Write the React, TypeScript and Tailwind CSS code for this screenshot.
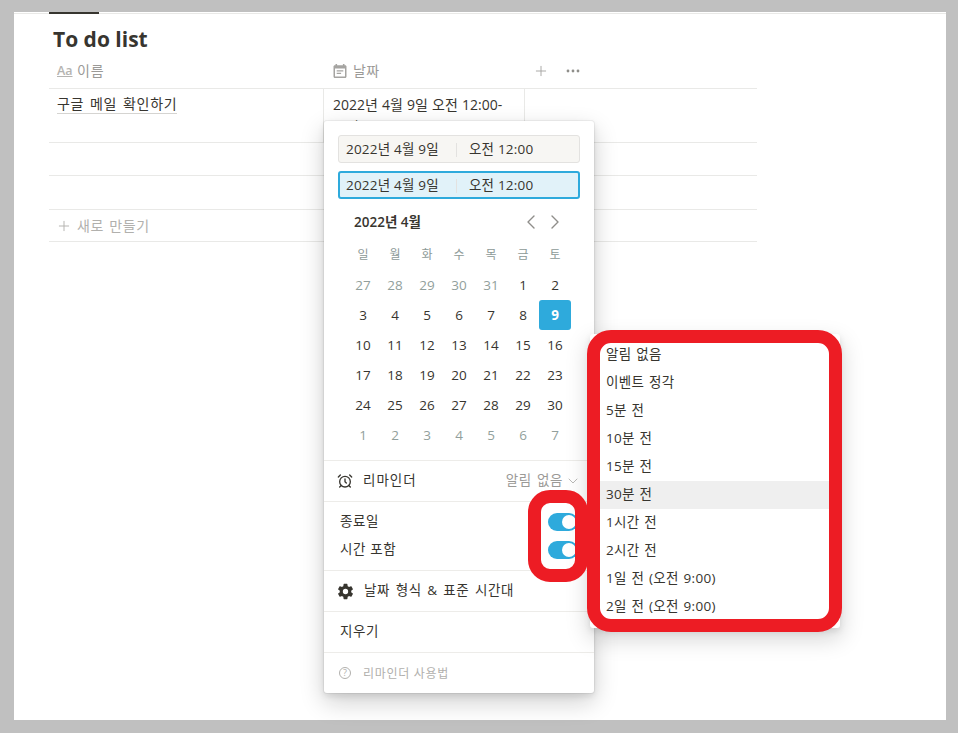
import { AlarmClock, ChevronDown, ChevronLeft, ChevronRight, Plus } from "lucide-react";
import { IoSettingsSharp } from "react-icons/io5";

const weekdays = ["일", "월", "화", "수", "목", "금", "토"];
const days = [
  27, 28, 29, 30, 31, 1, 2, 3, 4, 5, 6, 7, 8, 9, 10, 11, 12, 13, 14, 15, 16, 17, 18, 19, 20, 21, 22, 23, 24, 25, 26, 27,
  28, 29, 30, 1, 2, 3, 4, 5, 6, 7,
];
const reminders = [
  "알림 없음",
  "이벤트 정각",
  "5분 전",
  "10분 전",
  "15분 전",
  "30분 전",
  "1시간 전",
  "2시간 전",
  "1일 전 (오전 9:00)",
  "2일 전 (오전 9:00)",
];

function CalendarIcon() {
  return (
    <svg width="16" height="16" viewBox="0 0 16 16" className="shrink-0 text-[#a5a4a1]">
      <path
        fill="currentColor"
        d="M3.5 1h1.6v1.2h5.8V1h1.6v1.2h.6c.8 0 1.4.6 1.4 1.4v9.9c0 .8-.6 1.5-1.4 1.5H2.9c-.8 0-1.4-.7-1.4-1.5V3.6c0-.8.6-1.4 1.4-1.4h.6V1zM3 5.6v7.6c0 .2.1.3.3.3h9.4c.2 0 .3-.1.3-.3V5.6H3zm1.7 1.6h6.6v1.3H4.7V7.2zm0 2.6h4.4v1.3H4.7V9.8z"
      />
    </svg>
  );
}

function DateInput({ active }: { active?: boolean }) {
  return (
    <div
      className={
        active
          ? "flex h-7 items-center rounded-[3px] border-2 border-[#2eaadc] bg-[#e1f2f9] pt-px pl-[6px] text-[#37352f]"
          : "flex h-7 items-center rounded-[3px] border border-[#e3e2e0] bg-[#f7f6f3] pt-px pl-[7px] text-[#37352f]"
      }
    >
      <span className="w-[110px] tracking-[0.2px] whitespace-nowrap">2022년 4월 9일</span>
      <span className="h-[14px] w-px bg-[#e3e2e0]" />
      <span className="ml-3 tracking-[0.2px] whitespace-nowrap">오전 12:00</span>
    </div>
  );
}

function Toggle() {
  return (
    <span className="flex h-[18px] w-[30px] items-center justify-end rounded-full bg-[#2eaadc] p-[2px]">
      <span className="h-[14px] w-[14px] rounded-full bg-white" />
    </span>
  );
}

function DatePopup() {
  return (
    <div className="absolute top-[109px] left-[310px] flex h-[572px] w-[270px] flex-col rounded-[3px] bg-white text-[13.5px] text-[#37352f] shadow-[0_0_0_1px_rgba(15,15,15,0.05),0_3px_6px_rgba(15,15,15,0.1),0_9px_24px_rgba(15,15,15,0.2)]">
      <div className="flex flex-col gap-2 px-[14px] pt-[14px]">
        <DateInput />
        <DateInput active />
      </div>
      <div className="flex h-[41px] items-center justify-between pt-[5px] pr-[27px] pl-[30px]">
        <span className="pt-px font-semibold">2022년 4월</span>
        <div className="flex text-[#8f8e8a]">
          <ChevronLeft size={24} strokeWidth={1.4} />
          <ChevronRight size={24} strokeWidth={1.4} />
        </div>
      </div>
      <div className="grid grid-cols-[repeat(7,32px)] px-[23px] text-center">
        {weekdays.map((d) => (
          <div key={d} className="flex h-[30px] items-center justify-center text-xs text-[#8d9a97]">
            {d}
          </div>
        ))}
        {days.map((d, i) => {
          const muted = i < 5 || i > 34;
          const selected = i === 13;
          return (
            <div
              key={i}
              className={
                selected
                  ? "flex h-[30px] items-center justify-center rounded-[3px] bg-[#2eaadc] pt-px font-bold text-white"
                  : muted
                    ? "flex h-[30px] items-center justify-center pt-px text-[#929f9c]"
                    : "flex h-[30px] items-center justify-center pt-px"
              }
            >
              {d}
            </div>
          );
        })}
      </div>
      <div className="mt-[10px] flex h-[41px] items-center border-t border-[#edece9] pr-[13px] pl-[13px]">
        <AlarmClock size={16} strokeWidth={2} />
        <span className="ml-[10px] tracking-[1px]">리마인더</span>
        <span className="ml-auto tracking-[0.6px] text-[#9b9a97] [word-spacing:1px]">알림 없음</span>
        <ChevronDown size={16} strokeWidth={1.4} className="ml-[2px] text-[#b5b4b1]" />
      </div>
      <div className="flex h-[69px] flex-col justify-center gap-[10px] border-t border-[#edece9] pr-[16px] pl-[16px]">
        <div className="flex h-[18px] items-center justify-between">
          <span className="tracking-[0.6px]">종료일</span>
          <Toggle />
        </div>
        <div className="flex h-[18px] items-center justify-between">
          <span className="tracking-[0.6px]">시간 포함</span>
          <Toggle />
        </div>
      </div>
      <div className="flex h-[41px] items-center border-t border-[#edece9] pl-[13px]">
        <IoSettingsSharp size={17} />
        <span className="ml-[10px] tracking-[0.6px] [word-spacing:1.5px]">날짜 형식 &amp; 표준 시간대</span>
      </div>
      <div className="flex h-[41px] items-center border-t border-[#edece9] pl-[16px] tracking-[0.6px]">지우기</div>
      <div className="flex flex-1 items-center border-t border-[#edece9] pl-[15px] text-xs text-[#b1b0ad]">
        <span className="flex h-[12px] w-[12px] items-center justify-center rounded-full border border-[#b1b0ad] text-[9px]">
          ?
        </span>
        <span className="ml-[12px] pt-px tracking-[0.7px]">리마인더 사용법</span>
      </div>
    </div>
  );
}

function ReminderMenu() {
  return (
    <div className="absolute top-[322px] left-[576px] h-[294px] w-[250px] rounded-[3px] bg-white pt-[7px] text-[13.5px] text-[#37352f] shadow-[0_3px_6px_rgba(15,15,15,0.1),0_9px_24px_rgba(15,15,15,0.2)]">
      {reminders.map((r) => (
        <div
          key={r}
          className={
            r === "30분 전"
              ? "flex h-7 items-center bg-[#efefef] pl-[16px] tracking-[0.3px] [word-spacing:1px]"
              : "flex h-7 items-center pl-[16px] tracking-[0.3px] [word-spacing:1px]"
          }
        >
          {r}
        </div>
      ))}
    </div>
  );
}

export default function App() {
  return (
    <div className="h-[733px] w-[958px] overflow-hidden bg-[#c0c0c0] pt-3 pr-3 pb-[13px] pl-[14px] font-['Open_Sans','Noto_Sans_CJK_KR',sans-serif]">
      <div className="relative h-full bg-white text-sm text-[#37352f]">
        <div className="h-px translate-y-px bg-[#e9e9e7]" />
        <div className="absolute top-0 left-[35px] h-[2px] w-[50px] bg-[#37352f]" />
        <div className="ml-[35px] w-[708px]">
          <h1 className="flex h-[44px] items-center pt-[7px] pl-[4px] text-[21px] font-bold">To do list</h1>
          <div className="flex h-[32px] items-center border-b border-[#e9e9e7] pb-[3px] text-[#9b9a97]">
            <div className="flex w-[275px] items-center pl-[8px]">
              <span className="w-[20px] text-[12.5px] font-semibold text-[#b5b4b1] underline">Aa</span>
              <span className="tracking-[0.8px]">이름</span>
            </div>
            <div className="flex w-[200px] items-center pl-[8px]">
              <CalendarIcon />
              <span className="ml-[5px] tracking-[0.4px]">날짜</span>
            </div>
            <Plus size={16} strokeWidth={1.4} className="ml-[9px] text-[#a5a4a1]" />
            <svg width="14" height="4" viewBox="0 0 14 4" className="ml-[17px] text-[#8f8e8a]">
              <circle cx="2" cy="2" r="1.4" fill="currentColor" />
              <circle cx="7" cy="2" r="1.4" fill="currentColor" />
              <circle cx="12" cy="2" r="1.4" fill="currentColor" />
            </svg>
          </div>
          <div className="flex h-[54px] border-b border-[#e9e9e7]">
            <div className="w-[275px] border-r border-[#e9e9e7] pt-[5px] pl-[8px]">
              <span className="border-b border-[#d5d4d1] tracking-[0.7px] [word-spacing:1.5px]">구글 메일 확인하기</span>
            </div>
            <div className="w-[201px] border-r border-[#e9e9e7] pt-[5px] pl-[9px] leading-[22px] [word-spacing:0.5px]">
              2022년 4월 9일 오전 12:00-
              <br />
              오전
            </div>
          </div>
          <div className="h-[33px] border-b border-[#e9e9e7]" />
          <div className="h-[34px] border-b border-[#e9e9e7]" />
          <div className="flex h-[32px] items-center border-b border-[#e9e9e7] pl-[7px] text-[#b1b0ad]">
            <Plus size={16} strokeWidth={1.4} />
            <span className="ml-[5px] tracking-[0.6px] [word-spacing:1px]">새로 만들기</span>
          </div>
        </div>
        <DatePopup />
        <ReminderMenu />
        <div className="absolute top-[478px] left-[514px] h-[92px] w-[60px] rounded-[22px] border-[13px] border-[#ed1c24]" />
        <div className="absolute top-[318px] left-[573px] h-[302px] w-[255px] rounded-[24px] border-[13px] border-[#ed1c24]" />
      </div>
    </div>
  );
}
